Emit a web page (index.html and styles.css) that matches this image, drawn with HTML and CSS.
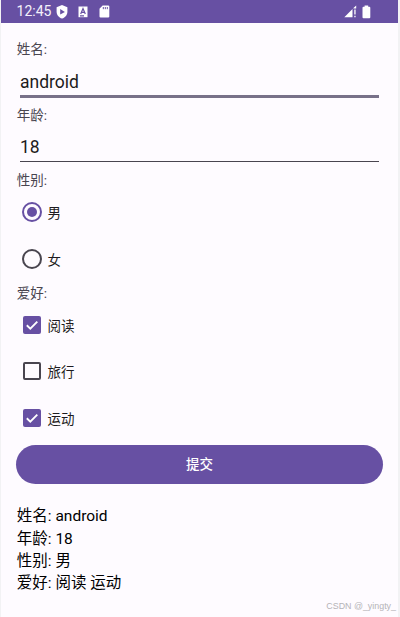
FILE: index.html
```html
<!DOCTYPE html>
<html lang="zh-CN">
<head>
<meta charset="utf-8">
<title>Form</title>
<link rel="stylesheet" href="styles.css">
</head>
<body>
<div class="screen">
  <header class="status">
    <span class="clock">12:45</span>
    <svg class="shield" width="12" height="14" viewBox="0 0 12 14"><path fill="#fff" d="M6 0 11.4 2.2V6.5C11.4 10 9.2 12.6 6 13.6 2.8 12.6.6 10 .6 6.5V2.2z"/><path fill="#6750a3" d="M4.2 4.1 8.9 6.9 4.2 9.6z"/></svg>
    <svg class="akey" width="10" height="12" viewBox="0 0 10 12"><path fill="#fff" d="M.5.5h9v10.7h-9z"/><path fill="none" stroke="#6750a3" stroke-width="1.2" d="M2.7 8 5 2.5 7.3 8M3.5 6.3h3M2 9.8h4"/></svg>
    <svg class="sd" width="11" height="13" viewBox="0 0 11 13"><path fill="#fff" d="M3.6.4H9.2Q10.3.4 10.3 1.5V11.4Q10.3 12.5 9.2 12.5H1.6Q.5 12.5.5 11.4V3.8z"/><path stroke="#6750a3" stroke-width="1" d="M4.3 2v2.2M6.3 2v2.2M8.3 2v2.2"/></svg>
    <svg class="signal" width="13" height="13" viewBox="0 0 13 13"><path fill="#fff" d="M.3 12.2 8.5 4V12.2zM9.4 3.1 12.2.4V3.5H9.4zM10.3 4.5h1.3v5h-1.3zM10.3 10.8h1.3v1.4h-1.3z"/></svg>
    <svg class="battery" width="9" height="14" viewBox="0 0 9 14"><path fill="#fff" d="M2.6.4h3.6v1.3h1.1q1 0 1 1v9.5q0 1-1 1H1.5q-1 0-1-1V2.7q0-1 1-1h1.1z"/></svg>
  </header>
  <main class="form">
    <div class="label">姓名:</div>
    <div class="field focused">android</div>
    <div class="label">年龄:</div>
    <div class="field">18</div>
    <div class="label">性别:</div>
    <div class="option"><i class="radio on"></i><span>男</span></div>
    <div class="option"><i class="radio"></i><span>女</span></div>
    <div class="label hobby">爱好:</div>
    <div class="option"><i class="check on"><svg width="18" height="18" viewBox="0 0 18 18"><path d="M3.8 9.2 7.3 12.6 14.3 5.6"/></svg></i><span>阅读</span></div>
    <div class="option"><i class="check"></i><span>旅行</span></div>
    <div class="option"><i class="check on"><svg width="18" height="18" viewBox="0 0 18 18"><path d="M3.8 9.2 7.3 12.6 14.3 5.6"/></svg></i><span>运动</span></div>
    <div class="submit">提交</div>
    <div class="result">
      <div>姓名: android</div>
      <div>年龄: 18</div>
      <div>性别: 男</div>
      <div>爱好: 阅读 运动</div>
    </div>
  </main>
  <div class="watermark">CSDN @_yingty_</div>
</div>
</body>
</html>
```
FILE: styles.css
```css
* { box-sizing: border-box; }
body {
  margin: 0;
  background: #f2f2f4;
  font-family: Roboto, "Noto Sans CJK SC", sans-serif;
  color: #1d1b20;
}
.screen {
  position: relative;
  height: 617px;
  margin: 0 2px 0 1px;
  background: #fefbff;
  overflow: hidden;
}
.status {
  display: flex;
  align-items: center;
  height: 23px;
  padding: 0 27px 0 15.6px;
  background: #6750a3;
}
.clock { width: 39.4px; font-size: 14px; line-height: 23px; color: #f4f0fa; }
.akey { margin-left: 10px; }
.sd { margin-left: 11px; }
.signal { margin-left: auto; }
.battery { margin-left: 5px; }
.form { padding: 17px 15px 0; }
.label {
  height: 18px;
  padding-left: .7px;
  font-size: 13.5px;
  line-height: 18px;
  color: #49454f;
}
.field {
  height: 38px;
  margin: 0 4px 9px;
  padding-top: 7px;
  border-bottom: 1px solid #49454f;
  font-size: 17.5px;
  line-height: 32px;
}
.field.focused {
  height: 40px;
  margin-bottom: 8px;
  padding-top: 8px;
  border-bottom: 3px solid #787189;
}
.label.hobby { margin-top: 2px; }
.option {
  display: flex;
  align-items: center;
  height: 46.4px;
  padding-left: 6px;
  font-size: 13.5px;
}
.option span { padding-left: .6px; }
.radio {
  display: flex;
  align-items: center;
  justify-content: center;
  width: 20px;
  height: 20px;
  margin-right: 5px;
  border: 2px solid #49454f;
  border-radius: 50%;
}
.radio.on { border-color: #6750a3; }
.radio.on::after {
  content: "";
  width: 10px;
  height: 10px;
  border-radius: 50%;
  background: #6750a3;
}
.check {
  width: 18px;
  height: 18px;
  margin: 0 6px 0 1px;
  border: 2px solid #49454f;
  border-radius: 2px;
}
.check.on { border: 0; background: #6750a3; }
.check svg { display: block; fill: none; stroke: #fff; stroke-width: 1.9; }
.submit {
  height: 39px;
  margin-top: 3.8px;
  border-radius: 20px;
  background: #6750a3;
  color: #fff;
  font-size: 13.5px;
  font-weight: 500;
  line-height: 39px;
  text-align: center;
}
.result {
  margin-top: 21.5px;
  padding-left: .8px;
  font-size: 15.5px;
  line-height: 22.3px;
  color: #000;
}
.watermark {
  position: absolute;
  right: 2px;
  bottom: 4px;
  font: 8.9px/14px "Liberation Sans", sans-serif;
  color: #b5b3b7;
}
```
